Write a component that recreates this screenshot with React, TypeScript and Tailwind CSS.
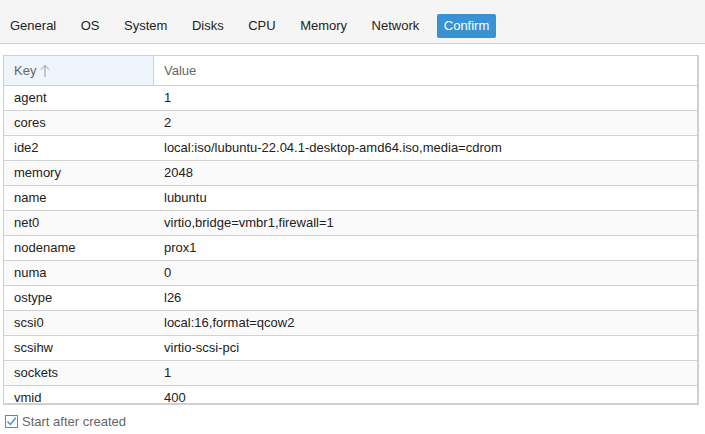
import React from 'react';

const tabs = ['General', 'OS', 'System', 'Disks', 'CPU', 'Memory', 'Network', 'Confirm'];

const rows: [string, string][] = [
  ['agent', '1'],
  ['cores', '2'],
  ['ide2', 'local:iso/lubuntu-22.04.1-desktop-amd64.iso,media=cdrom'],
  ['memory', '2048'],
  ['name', 'lubuntu'],
  ['net0', 'virtio,bridge=vmbr1,firewall=1'],
  ['nodename', 'prox1'],
  ['numa', '0'],
  ['ostype', 'l26'],
  ['scsi0', 'local:16,format=qcow2'],
  ['scsihw', 'virtio-scsi-pci'],
  ['sockets', '1'],
  ['vmid', '400'],
];

export default function App() {
  return (
    <div className="w-[705px] h-[434px] overflow-hidden bg-white text-[13px] text-[#222] font-['Liberation_Sans',Arial,sans-serif]">
      {/* TAB BAR */}
      <div className="h-[44px] bg-[#f5f5f5] border-b border-[#d0d0d0] flex items-end pb-[5px] pl-[3px] gap-[10.5px]">
        {tabs.map((t) => (
          <div
            key={t}
            className={`h-[24px] px-[7px] flex items-center rounded-[2px] ${
              t === 'Confirm' ? 'bg-[#3892d4] text-white' : 'text-[#222]'
            }`}
          >
            {t}
          </div>
        ))}
      </div>

      {/* GRID */}
      <div className="ml-[3px] mr-[6px] mt-[11px] h-[350px] border-l border-t border-r-2 border-b-2 border-[#d0d0d0] overflow-hidden">
        <div className="flex h-[30px] border-b border-[#d0d0d0] text-[#666]">
          <div className="w-[150px] bg-[#eef5fc] border-r border-[#d0d0d0] pl-[10px] flex items-center">
            Key
            <svg width="10" height="14" viewBox="0 0 10 14" className="ml-[4px]">
              <path d="M5 1.5 V13 M1 5.5 L5 1.5 L9 5.5" fill="none" stroke="#999" strokeWidth="1" />
            </svg>
          </div>
          <div className="flex-1 pl-[10px] flex items-center">Value</div>
        </div>
        {rows.map(([k, v], i) => (
          <div
            key={k}
            className={`flex h-[25px] border-b border-[#d0d0d0] items-center ${
              i % 2 === 1 ? 'bg-[#fafafa]' : 'bg-white'
            }`}
          >
            <div className="w-[150px] pl-[10px]">{k}</div>
            <div className="flex-1 pl-[10px]">{v}</div>
          </div>
        ))}
      </div>

      {/* START AFTER CREATED */}
      <div className="flex items-center mt-[7px] pl-[5px] gap-[4px]">
        <div className="w-[13px] h-[13px] border border-[#3892d4] bg-white flex items-center justify-center">
          <svg width="11" height="11" viewBox="0 0 11 11">
            <path d="M1.5 5.5 L4.3 8.5 L9.8 1.8" fill="none" stroke="#3892d4" strokeWidth="1.4" />
          </svg>
        </div>
        <span className="text-[#666]">Start after created</span>
      </div>
    </div>
  );
}
